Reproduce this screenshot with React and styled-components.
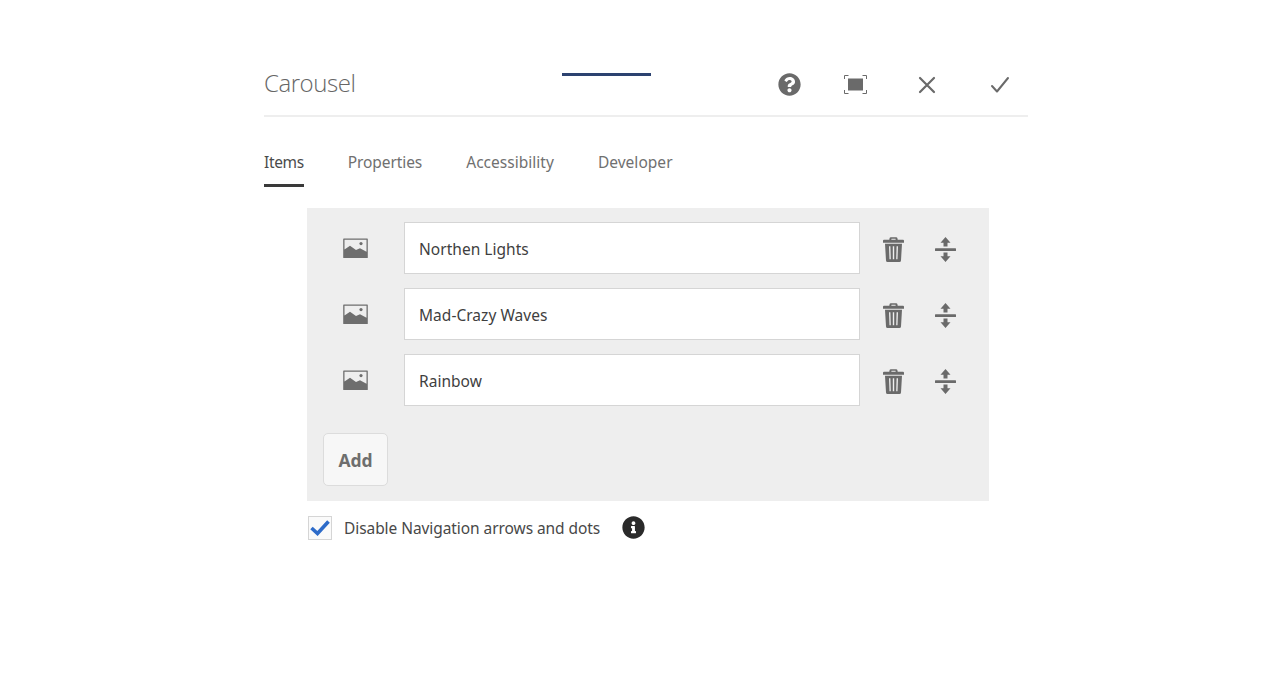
import React from "react";
import styled, { createGlobalStyle } from "styled-components";
import { FaQuestionCircle, FaInfoCircle } from "react-icons/fa";

const Global = createGlobalStyle`
  html, body { margin: 0; padding: 0; background: #fff; }
  body { font-family: "Noto Sans", "Open Sans", sans-serif; color: #4b4b4b; }
`;

const Page = styled.div`
  width: 1280px;
  height: 696px;
  overflow: hidden;
  box-sizing: border-box;
  padding: 54px 0 0 264px;
`;
const Dialog = styled.section`
  width: 764px;
  position: relative;
`;
const Header = styled.header`
  height: 63px;
  box-sizing: border-box;
  border-bottom: 2px solid #eeeeee;
  display: flex;
  align-items: center;
  justify-content: space-between;
`;
const Title = styled.h1`
  margin: 0 0 3px;
  font: 300 24px/30px "Open Sans", sans-serif;
  letter-spacing: -0.45px;
  color: #666666;
`;
const Progress = styled.div`
  position: absolute;
  left: 298px;
  top: 19px;
  width: 89px;
  height: 3px;
  background: #2c4270;
`;
const Actions = styled.div`
  display: flex;
  align-items: center;
  margin: 0 15px 0 0;
`;
const IconButton = styled.button`
  border: 0;
  padding: 0;
  background: none;
  display: flex;
  align-items: center;
  justify-content: center;
  width: 26px;
  height: 26px;
  margin-left: ${(p) => p.$gap}px;
  color: #6a6a6a;
`;
const Tabs = styled.nav`
  display: flex;
  gap: 44px;
  margin-top: 32px;
`;
const Tab = styled.div`
  height: 38px;
  box-sizing: border-box;
  padding-top: 1px;
  font-size: 15.5px;
  line-height: 24px;
  letter-spacing: ${(p) => p.$ls}px;
  color: ${(p) => (p.$active ? "#4b4b4b" : "#707070")};
  border-bottom: 3px solid ${(p) => (p.$active ? "#3a3a3a" : "transparent")};
`;
const Panel = styled.div`
  margin: 21px 39px 0 43px;
  height: 293px;
  box-sizing: border-box;
  background: #eeeeee;
  padding: 14px 0 0 16px;
`;
const Rows = styled.div`
  display: flex;
  flex-direction: column;
  gap: 14px;
`;
const Row = styled.div`
  display: flex;
  align-items: center;
  height: 52px;
`;
const Thumb = styled.div`
  width: 65px;
  margin-right: 16px;
  display: flex;
  justify-content: center;
  color: #6e6e6e;
`;
const TextField = styled.div`
  width: 456px;
  height: 52px;
  box-sizing: border-box;
  background: #fff;
  border: 1px solid #d5d5d5;
  padding: 1px 0 0 14px;
  display: flex;
  align-items: center;
  font-size: 15.5px;
  letter-spacing: 0.03px;
  color: #3f3f3f;
`;
const RowIcon = styled.div`
  display: flex;
  color: #6a6a6a;
  margin: 2px 0 0 ${(p) => p.$gap}px;
`;
const AddButton = styled.button`
  display: block;
  margin-top: 27px;
  width: 65px;
  height: 53px;
  box-sizing: border-box;
  background: #f7f7f7;
  border: 1px solid #dcdcdc;
  border-radius: 5px;
  font: 700 17.5px "Noto Sans", sans-serif;
  letter-spacing: -0.1px;
  color: #6e6e6e;
  padding: 0;
`;
const CheckRow = styled.div`
  display: flex;
  align-items: center;
  margin: 15px 0 0 44px;
`;
const CheckBox = styled.div`
  width: 24px;
  height: 24px;
  box-sizing: border-box;
  border: 1px solid #d5d5d5;
  background: #fafafa;
  display: flex;
  align-items: center;
  justify-content: center;
  color: #2d6bc9;
`;
const CheckLabel = styled.span`
  margin-left: 12px;
  font-size: 15.5px;
  letter-spacing: -0.07px;
  line-height: 24px;
  color: #484848;
`;
const Info = styled.div`
  display: flex;
  margin: -1px 0 0 22px;
  color: #2a2a2a;
`;

const ImageIcon = () => (
  <svg width="25" height="20" viewBox="0 0 25 20" fill="currentColor">
    <path fillRule="evenodd" d="M.8.5h23.400a.6.6 0 0 1 .6.6v18.300a.6.6 0 0 1-.6.6H.8a.6.6 0 0 1-.6-.6V1.100a.6.6 0 0 1 .6-.6ZM1.500 1.800V11.500L7 7.800l6 4.200 4-1.800 6.500 3.500V1.800Z" />
    <circle cx="18" cy="5.600" r="1.600" />
  </svg>
);
const TrashIcon = () => (
  <svg width="21" height="25" viewBox="0 0 21 25" fill="currentColor">
    <path fillRule="evenodd" d="M6.500 1.500A1.500 1.500 0 0 1 8 .2h5a1.500 1.500 0 0 1 1.500 1.300l.2 1.200h5.300a1 1 0 0 1 1 1v2H0v-2a1 1 0 0 1 1-1h5.300ZM8.300 2.700h4.400L12.500 1.700h-4Z" />
    <path fillRule="evenodd" d="M2 6.800h17l-1 16.600a1.600 1.600 0 0 1-1.600 1.500H4.600A1.600 1.600 0 0 1 3 23.400ZM6 9.300l.5 13h1.300L7.400 9.300ZM9.800 9.300v13h1.400v-13ZM13.600 9.300l-.4 13h1.300l.5-13Z" />
  </svg>
);
const MoveIcon = () => (
  <svg width="21" height="25" viewBox="0 0 21 25" fill="currentColor">
    <rect x="0" y="11.300" width="21" height="2.600" rx="0.5" />
    <path d="M10.500 0 15.500 5.700H12.500V9.500H8.500V5.700H5.500Z" />
    <path d="M10.500 25 15.500 19.300H12.500V15.500H8.500V19.300H5.500Z" />
  </svg>
);
const FullIcon = () => (
  <svg width="23" height="19" viewBox="0 0 23 19" fill="none" stroke="currentColor" strokeWidth="1">
    <path d="M.5 4V.5H4.500M18.500.5h4V4M22.500 15v3.500h-4M4.500 18.500h-4V15" />
    <rect x="4" y="3.500" width="15" height="12" fill="currentColor" stroke="none" />
  </svg>
);
const CloseIcon = () => (
  <svg width="18" height="18" viewBox="0 0 18 18" fill="none" stroke="currentColor" strokeWidth="2.200" strokeLinecap="round">
    <path d="M2 2 16 16M16 2 2 16" />
  </svg>
);
const DoneIcon = () => (
  <svg width="20" height="18" viewBox="0 0 20 18" fill="none" stroke="currentColor" strokeWidth="2" strokeLinecap="round" strokeLinejoin="round">
    <path d="M2 10 7 15.500 18 2" />
  </svg>
);
const TickIcon = () => (
  <svg width="20" height="16" viewBox="0 0 20 16" fill="none" stroke="currentColor" strokeWidth="3.600" strokeLinejoin="miter">
    <path d="M1.500 8 7.500 13.500 18.500 1.500" />
  </svg>
);

const items = ["Northen Lights", "Mad-Crazy Waves", "Rainbow"];
const tabs = [
  ["Items", -0.36],
  ["Properties", -0.08],
  ["Accessibility", 0.02],
  ["Developer", 0.03],
];

export default function App() {
  return (
    <Page>
      <Global />
      <Dialog>
        <Header>
          <Title>Carousel</Title>
          <Actions>
            <IconButton $gap={0}><FaQuestionCircle size={23} /></IconButton>
            <IconButton $gap={40}><FullIcon /></IconButton>
            <IconButton $gap={46}><CloseIcon /></IconButton>
            <IconButton $gap={47}><DoneIcon /></IconButton>
          </Actions>
        </Header>
        <Progress />
        <Tabs>
          {tabs.map(([t, ls], i) => (
            <Tab key={t} $active={i === 0} $ls={ls}>{t}</Tab>
          ))}
        </Tabs>
        <Panel>
          <Rows>
            {items.map((t) => (
              <Row key={t}>
                <Thumb><ImageIcon /></Thumb>
                <TextField>{t}</TextField>
                <RowIcon $gap={23}><TrashIcon /></RowIcon>
                <RowIcon $gap={31}><MoveIcon /></RowIcon>
              </Row>
            ))}
          </Rows>
          <AddButton>Add</AddButton>
        </Panel>
        <CheckRow>
          <CheckBox><TickIcon /></CheckBox>
          <CheckLabel>Disable Navigation arrows and dots</CheckLabel>
          <Info><FaInfoCircle size={23} /></Info>
        </CheckRow>
      </Dialog>
    </Page>
  );
}
